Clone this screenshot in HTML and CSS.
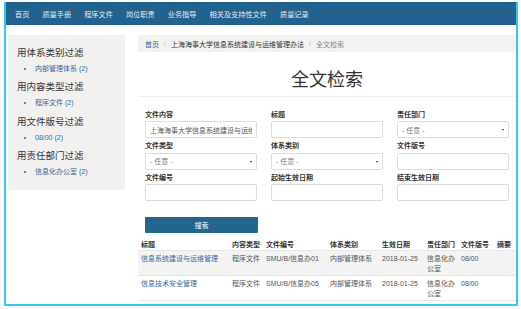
FILE: index.html
```html
<!DOCTYPE html>
<html lang="zh-CN">
<head>
  <meta charset="UTF-8">
  <title>全文检索</title>
  <link rel="stylesheet" href="styles.css">
</head>
<body>
  <div class="frame">

    <!-- Top navigation -->
    <nav class="topnav">
      <a href="#">首页</a>
      <a href="#">质量手册</a>
      <a href="#">程序文件</a>
      <a href="#">岗位职责</a>
      <a href="#">业务指导</a>
      <a href="#">相关及支持性文件</a>
      <a href="#">质量记录</a>
    </nav>

    <div class="layout">

      <!-- Facet filters -->
      <aside class="sidebar">
        <div class="facet">
          <h3>用体系类别过滤</h3>
          <ul><li><a href="#">内部管理体系 (2)</a></li></ul>
        </div>
        <div class="facet">
          <h3>用内容类型过滤</h3>
          <ul><li><a href="#">程序文件 (2)</a></li></ul>
        </div>
        <div class="facet">
          <h3>用文件版号过滤</h3>
          <ul><li><a href="#">08/00 (2)</a></li></ul>
        </div>
        <div class="facet">
          <h3>用责任部门过滤</h3>
          <ul><li><a href="#">信息化办公室 (2)</a></li></ul>
        </div>
      </aside>

      <main class="content">
        <div class="breadcrumb">
          <a href="#">首页</a>
          <span class="sep">/</span>
          <a href="#" class="crumb-dark">上海海事大学信息系统建设与运维管理办法</a>
          <span class="sep">/</span>
          <span class="current">全文检索</span>
        </div>

        <h1 class="page-title">全文检索</h1>

        <form class="search-form">
          <div class="field">
            <label>文件内容</label>
            <input type="text" value="上海海事大学信息系统建设与运维管理办法">
          </div>
          <div class="field">
            <label>标题</label>
            <input type="text">
          </div>
          <div class="field">
            <label>责任部门</label>
            <div class="select"><span>- 任意 -</span></div>
          </div>
          <div class="field">
            <label>文件类型</label>
            <div class="select"><span>- 任意 -</span></div>
          </div>
          <div class="field">
            <label>体系类别</label>
            <div class="select"><span>- 任意 -</span></div>
          </div>
          <div class="field">
            <label>文件版号</label>
            <input type="text">
          </div>
          <div class="field">
            <label>文件编号</label>
            <input type="text">
          </div>
          <div class="field">
            <label>起始生效日期</label>
            <input type="text">
          </div>
          <div class="field">
            <label>结束生效日期</label>
            <input type="text">
          </div>
        </form>

        <button type="button" class="search-btn">搜索</button>

        <table class="results">
          <colgroup>
            <col style="width: 91px">
            <col style="width: 34px">
            <col style="width: 64px">
            <col style="width: 52px">
            <col style="width: 45px">
            <col style="width: 34px">
            <col style="width: 36px">
            <col>
          </colgroup>
          <thead>
            <tr>
              <th>标题</th>
              <th>内容类型</th>
              <th>文件编号</th>
              <th>体系类别</th>
              <th>生效日期</th>
              <th>责任部门</th>
              <th>文件版号</th>
              <th>摘要</th>
            </tr>
          </thead>
          <tbody>
            <tr class="striped">
              <td><a href="#">信息系统建设与运维管理</a></td>
              <td>程序文件</td>
              <td>SMU/B/信息办01</td>
              <td>内部管理体系</td>
              <td>2018-01-25</td>
              <td>信息化办公室</td>
              <td>08/00</td>
              <td></td>
            </tr>
            <tr>
              <td><a href="#">信息技术安全管理</a></td>
              <td>程序文件</td>
              <td>SMU/B/信息办05</td>
              <td>内部管理体系</td>
              <td>2018-01-25</td>
              <td>信息化办公室</td>
              <td>08/00</td>
              <td></td>
            </tr>
          </tbody>
        </table>
      </main>
    </div>
  </div>
</body>
</html>
```

FILE: styles.css
```css
body {
  margin: 0;
  background-color: white;
  font-family: "Liberation Sans", "Noto Sans CJK SC", sans-serif;
  color: #555;
}

a {
  text-decoration: none;
}

.frame {
  margin: 2px 0 0 4px;
  width: 514px;
  height: 304px;
  box-sizing: border-box;
  border: 2px solid #35c8f6;
  border-top: none;
  overflow: hidden;
}

/* top navigation */
.topnav {
  display: flex;
  align-items: center;
  gap: 13px;
  height: 23px;
  padding-left: 9px;
  background-color: #21628f;
}

.topnav a {
  color: #e4ecf3;
  font-size: 7.2px;
}

.layout {
  display: flex;
  gap: 13px;
  padding: 10px 0 0 2px;
}

/* sidebar */
.sidebar {
  width: 117px;
  flex-shrink: 0;
  height: 155px;
  box-sizing: border-box;
  padding: 10.5px 0 0 9px;
  background-color: #f2f1ef;
}

.facet {
  margin-bottom: 4.5px;
}

.facet h3 {
  margin: 0 0 2px;
  font-size: 9.5px;
  line-height: 14px;
  font-weight: normal;
  color: #333;
}

.facet ul {
  margin: 0;
  padding-left: 18px;
  font-size: 7px;
  line-height: 14px;
  color: #555;
}

.facet a {
  color: #35689a;
}

/* main content */
.content {
  flex: 1;
  min-width: 0;
}

.breadcrumb {
  height: 17px;
  display: flex;
  align-items: center;
  padding-left: 7px;
  background-color: #f2f2f0;
  font-size: 7px;
}

.breadcrumb a {
  color: #35689a;
}

.breadcrumb .crumb-dark {
  color: #333;
}

.breadcrumb .sep {
  color: #bbb;
  margin: 0 5px;
}

.breadcrumb .current {
  color: #888;
}

.page-title {
  margin: 15px 0 0;
  padding-bottom: 3px;
  border-bottom: 1px solid #eeeeee;
  text-align: center;
  font-size: 18px;
  line-height: 26px;
  font-weight: normal;
  color: #333;
}

.search-form {
  display: grid;
  grid-template-columns: repeat(3, 112px);
  column-gap: 14px;
  row-gap: 3px;
  margin: 12.5px 0 0;
  padding-left: 7px;
}

.field label {
  display: block;
  font-size: 7px;
  line-height: 9px;
  font-weight: bold;
  color: #333;
  margin-bottom: 2.5px;
}

.field input,
.select {
  display: block;
  width: 100%;
  height: 17px;
  box-sizing: border-box;
  margin: 0;
  padding: 0 4px;
  border: 1px solid #dcdcdc;
  border-radius: 2px;
  background-color: white;
  font-family: "Liberation Sans", "Noto Sans CJK SC", sans-serif;
  font-size: 7px;
  color: #555;
  outline: none;
}

.select {
  position: relative;
  display: flex;
  align-items: center;
  color: #777;
}

.select::after {
  content: "";
  position: absolute;
  right: 4px;
  top: 7px;
  border-left: 1.5px solid transparent;
  border-right: 1.5px solid transparent;
  border-top: 2px solid #444;
}

.search-btn {
  display: block;
  margin: 16px 0 0 7px;
  width: 113px;
  height: 16px;
  padding: 0;
  border: none;
  border-radius: 1px;
  background-color: #22658f;
  color: white;
  font-family: "Liberation Sans", "Noto Sans CJK SC", sans-serif;
  font-size: 7px;
  cursor: pointer;
}

/* results table */
.results {
  width: 100%;
  margin-top: 4px;
  border-collapse: collapse;
  table-layout: fixed;
  font-size: 7px;
  line-height: 10px;
}

.results th {
  padding: 3px 0 0 3px;
  text-align: left;
  font-weight: bold;
  color: #333;
  white-space: nowrap;
}

.results td {
  padding: 3px 0 1px 3px;
  vertical-align: top;
  border-top: 1px solid #e6e6e6;
  color: #555;
}

.results tbody tr:last-child td {
  border-bottom: 1px solid #e6e6e6;
}

.results td a {
  color: #35689a;
}

.results tr.striped td {
  background-color: #f3f3f3;
}
```
